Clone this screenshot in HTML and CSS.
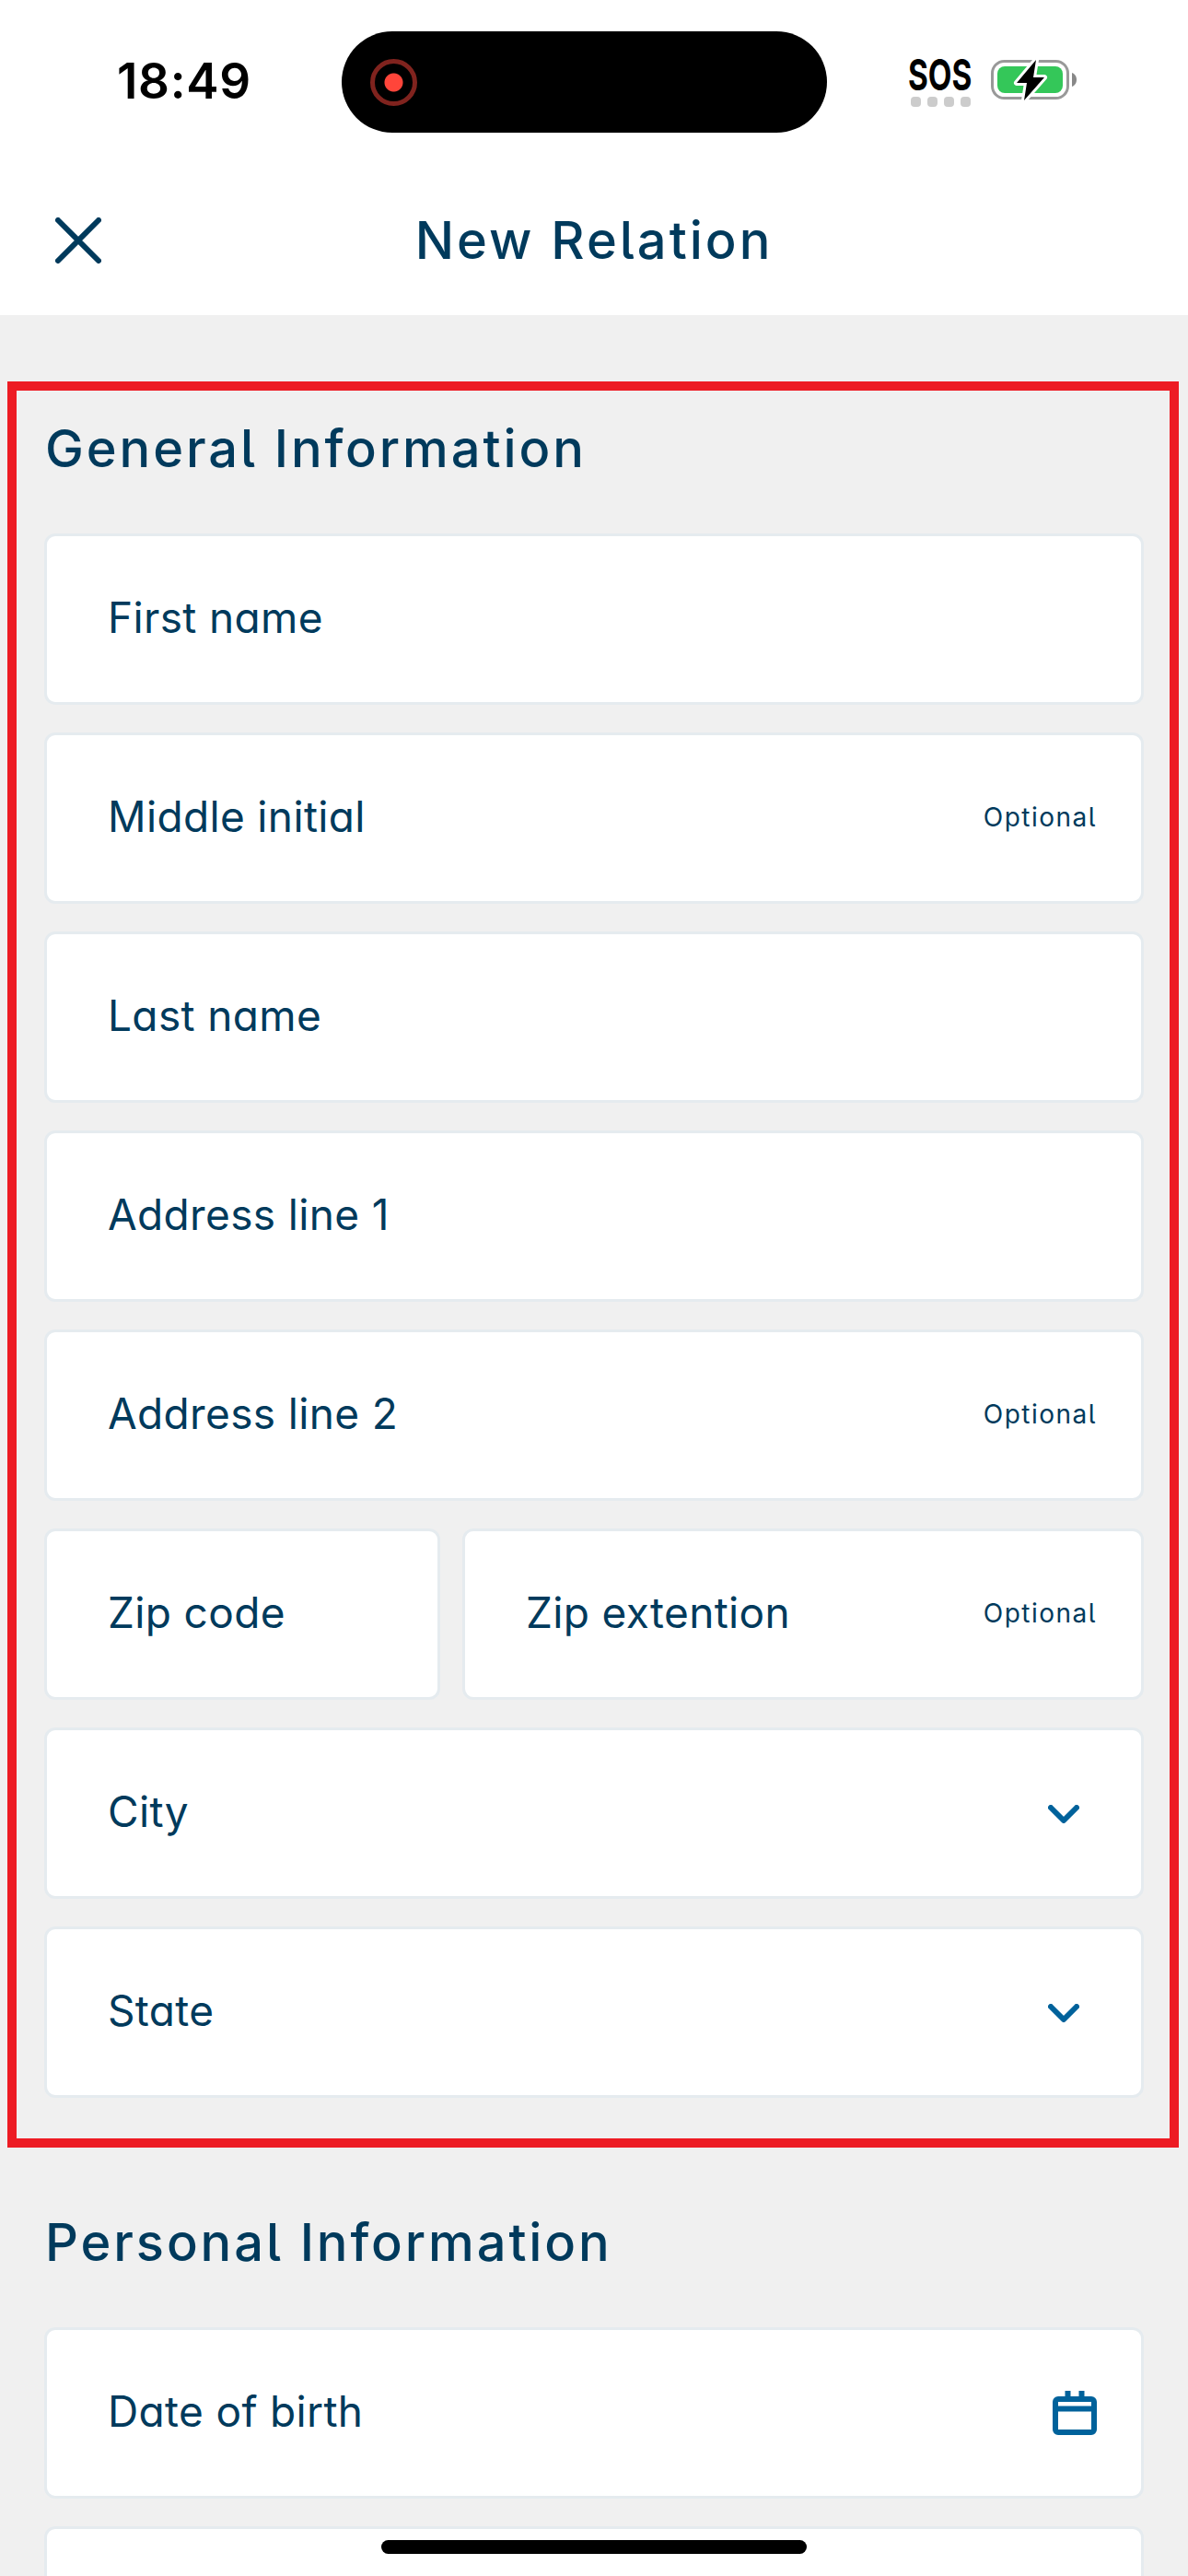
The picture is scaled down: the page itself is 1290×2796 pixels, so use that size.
FILE: index.html
```
<!DOCTYPE html>
<html lang="en">
  <head>
    <meta charset="UTF-8" />
    <meta name="viewport" content="width=device-width, initial-scale=1.0" />
    <title>New Relation</title>
    <link rel="stylesheet" href="styles.css">
  </head>
  <body>
    <header class="header">
      <div class="status-bar">
        <div class="time">18:49</div>
        <div class="island">
          <div class="record"></div>
        </div>
        <div class="signal">
          <div class="sos">SOS</div>
          <div class="dots"><span></span><span></span><span></span><span></span></div>
        </div>
        <svg class="battery" width="94" height="48" viewBox="0 0 94 48">
          <rect x="1.5" y="3.5" width="82" height="40" rx="13" fill="none" stroke="#999" stroke-width="3" />
          <rect x="7" y="9" width="71" height="29" rx="8" fill="#34c759" />
          <path d="M88 16c3 1 5 4 5 7.500s-2 6.500-5 7.500z" fill="#888" />
          <path d="M49 2L28 27h11l-3 19 22-25H46z" fill="#000" stroke="#fff" stroke-width="6" stroke-linejoin="round" paint-order="stroke" />
        </svg>
      </div>
      <div class="title-bar">
        <svg class="close" width="50" height="50" viewBox="0 0 50 50">
          <path d="M3 3l44 44M47 3L3 47" />
        </svg>
        <h1>New Relation</h1>
      </div>
    </header>

    <main class="form">
      <section class="section highlighted">
        <h2 class="general">General Information</h2>
        <div class="field"><label>First name</label></div>
        <div class="field"><label>Middle initial</label><span class="optional">Optional</span></div>
        <div class="field"><label>Last name</label></div>
        <div class="field"><label>Address line 1</label></div>
        <div class="field"><label>Address line 2</label><span class="optional">Optional</span></div>
        <div class="row">
          <div class="field zip"><label>Zip code</label></div>
          <div class="field"><label>Zip extention</label><span class="optional">Optional</span></div>
        </div>
        <div class="field">
          <label>City</label>
          <svg class="chevron" width="34" height="20" viewBox="0 0 34 20"><path d="M3 3l14 14L31 3" /></svg>
        </div>
        <div class="field">
          <label>State</label>
          <svg class="chevron" width="34" height="20" viewBox="0 0 34 20"><path d="M3 3l14 14L31 3" /></svg>
        </div>
      </section>

      <section class="section">
        <h2>Personal Information</h2>
        <div class="field">
          <label>Date of birth</label>
          <svg class="calendar" width="48" height="48" viewBox="0 0 48 48">
            <rect x="3" y="9" width="42" height="36" rx="3" />
            <path d="M3 19.500h42M16.500 0v8M31.500 0v8" />
          </svg>
        </div>
        <div class="field"></div>
      </section>
    </main>

    <div class="home-bar"></div>
  </body>
</html>
```
FILE: styles.css
```
* {
  box-sizing: border-box;
}

body {
  margin: 0;
  height: 2796px;
  overflow: hidden;
  position: relative;
  background: #f0f0f0;
  color: #003a5c;
  font-family: Inter, "Liberation Sans", sans-serif;
}

h1,
h2 {
  margin: 0;
  font-weight: 500;
  font-feature-settings: "cv05";
}

.header {
  height: 342px;
  background: #fff;
}

/* Status bar */
.status-bar {
  display: flex;
  align-items: flex-start;
  height: 180px;
  padding-top: 34px;
  color: #000;
}

.time {
  width: 371px;
  padding-left: 127px;
  padding-top: 21px;
  font-size: 53px;
  font-weight: 600;
  letter-spacing: 0.7px;
  line-height: 66px;
}

.island {
  display: flex;
  align-items: center;
  width: 527px;
  height: 110px;
  padding-left: 31px;
  border-radius: 55px;
  background: #000;
}

.record {
  width: 51px;
  height: 51px;
  border: 5px solid #80231e;
  border-radius: 50%;
  background: radial-gradient(circle, #ff453a 9.5px, transparent 10.5px);
}

.signal {
  width: 69px;
  margin-left: 89px;
  padding-top: 25px;
}

.sos {
  height: 46px;
  margin-left: -1px;
  font-size: 47px;
  font-weight: 700;
  line-height: 44px;
  transform: scaleX(0.71);
  transform-origin: left;
}

.dots {
  display: flex;
  gap: 7px;
  padding-left: 2px;
}

.dots span {
  width: 11px;
  height: 11px;
  border-radius: 4px;
  background: #ccc;
}

.battery {
  margin-left: 20px;
  margin-top: 29px;
}

/* Title bar */
.title-bar {
  display: grid;
  grid-template-columns: 110px 1fr 110px;
  align-items: center;
  height: 162px;
}

.close {
  margin-left: 60px;
  fill: none;
  stroke: #003a5c;
  stroke-width: 6;
  stroke-linecap: round;
}

h1 {
  font-size: 56px;
  letter-spacing: 3px;
  text-align: center;
  line-height: 70px;
}

/* Form */
.form {
  padding: 72px 10px 0 8px;
}

.section {
  display: flex;
  flex-direction: column;
  gap: 30px;
  padding: 0 38px 0 40px;
}

.highlighted {
  height: 1917px;
  padding: 0 28px 0 30px;
  border: 10px solid #ed1c24;
}

h2 {
  height: 165px;
  padding-top: 68px;
  padding-left: 1px;
  font-size: 56px;
  letter-spacing: 2.9px;
  line-height: 70px;
}

.general {
  height: 125px;
  padding-top: 28px;
}

.field {
  display: flex;
  flex: 1 0 auto;
  align-items: center;
  justify-content: space-between;
  height: 186px;
  max-height: 186px;
  padding: 0 48px 0 66px;
  border: 3px solid #e5ebef;
  border-radius: 12px;
  background: #fff;
}

.row {
  display: flex;
  gap: 24px;
}

.zip {
  flex: 0 0 430px;
}

label {
  padding-bottom: 4px;
  font-size: 46px;
  font-weight: 400;
  letter-spacing: 0.35px;
  font-feature-settings: "cv11";
  white-space: nowrap;
}

.optional {
  padding-bottom: 2px;
  font-size: 28px;
  font-weight: 400;
  letter-spacing: 1.5px;
  font-feature-settings: "cv05";
}

.chevron {
  margin-top: 2px;
  margin-right: 19px;
  fill: none;
  stroke: #00629b;
  stroke-width: 6;
  stroke-linecap: round;
  stroke-linejoin: round;
}

.calendar {
  fill: none;
  stroke: #00629b;
  stroke-width: 6;
}

.home-bar {
  position: absolute;
  left: 414px;
  bottom: 24px;
  width: 462px;
  height: 15px;
  border-radius: 8px;
  background: #000;
}
```
